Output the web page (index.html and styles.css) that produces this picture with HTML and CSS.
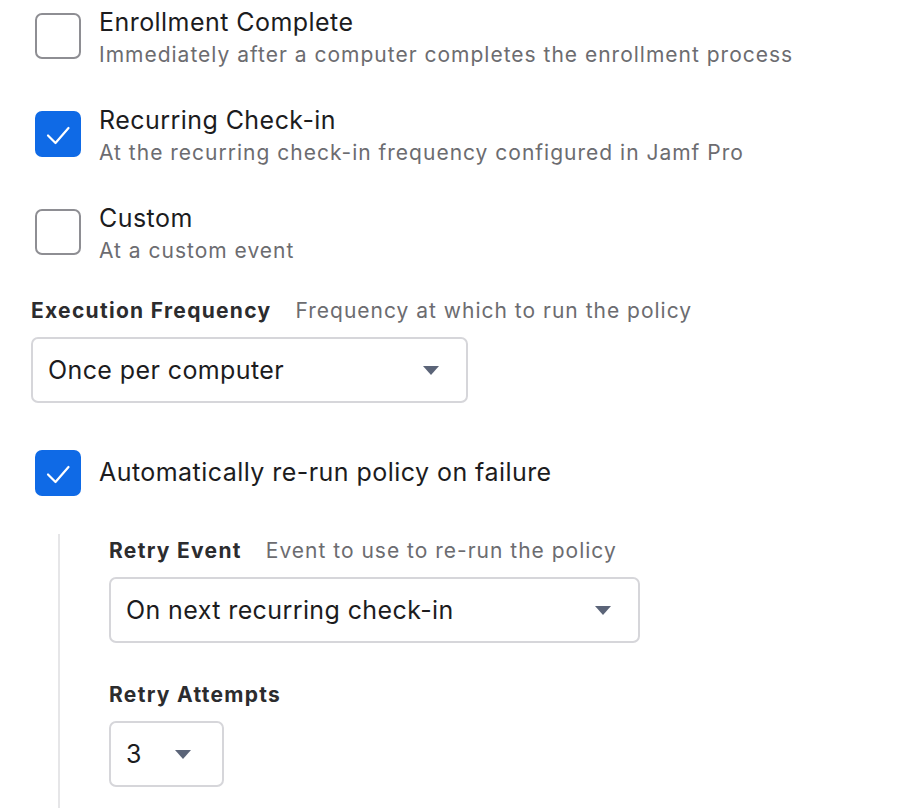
FILE: index.html
```html
<!DOCTYPE html>
<html>
<head>
<meta charset="utf-8">
<link rel="stylesheet" href="styles.css">
</head>
<body>
<div class="page">
  <div class="option">
    <span class="box"></span>
    <div class="text">
      <div class="title">Enrollment Complete</div>
      <div class="desc">Immediately after a computer completes the enrollment process</div>
    </div>
  </div>
  <div class="option">
    <span class="box checked"><svg viewBox="0 0 46 46" width="46" height="46"><path d="M13 24.5 L20.5 32 L33.5 17" fill="none" stroke="#fff" stroke-width="2.2" stroke-linecap="round" stroke-linejoin="round"/></svg></span>
    <div class="text">
      <div class="title">Recurring Check-in</div>
      <div class="desc">At the recurring check-in frequency configured in Jamf Pro</div>
    </div>
  </div>
  <div class="option">
    <span class="box"></span>
    <div class="text">
      <div class="title">Custom</div>
      <div class="desc">At a custom event</div>
    </div>
  </div>

  <div class="field freq">
    <div class="label"><span class="label-main">Execution Frequency</span><span class="helper">Frequency at which to run the policy</span></div>
    <div class="select w-freq"><span class="value">Once per computer</span><span class="caret"></span></div>
  </div>

  <div class="option single">
    <span class="box checked"><svg viewBox="0 0 46 46" width="46" height="46"><path d="M13 24.5 L20.5 32 L33.5 17" fill="none" stroke="#fff" stroke-width="2.2" stroke-linecap="round" stroke-linejoin="round"/></svg></span>
    <div class="title">Automatically re-run policy on failure</div>
  </div>

  <div class="nested">
    <div class="field">
      <div class="label"><span class="label-main">Retry Event</span><span class="helper">Event to use to re-run the policy</span></div>
      <div class="select w-event"><span class="value">On next recurring check-in</span><span class="caret"></span></div>
    </div>
    <div class="field attempts">
      <div class="label"><span class="label-main">Retry Attempts</span></div>
      <div class="select w-attempts"><span class="value">3</span><span class="caret"></span></div>
    </div>
  </div>
</div>
</body>
</html>
```

FILE: styles.css
```css
html, body {
  margin: 0;
  padding: 0;
  background: #ffffff;
}
body {
  font-family: "Inter", "Liberation Sans", sans-serif;
  color: #1c1c1e;
  width: 902px;
  height: 808px;
  overflow: hidden;
}
.page {
  padding: 7px 0 0 35px;
}
.option {
  display: flex;
  align-items: flex-start;
  gap: 18px;
  margin-bottom: 36px;
}
.box {
  flex: none;
  box-sizing: border-box;
  width: 46px;
  height: 46px;
  border: 2px solid #8e8e93;
  border-radius: 7px;
  margin-top: 6px;
  background: #fff;
  display: block;
}
.box.checked {
  border: none;
  background: #0f6ae6;
}
.box svg {
  display: block;
}
.title {
  font-size: 25px;
  line-height: 30px;
  letter-spacing: 0.45px;
  color: #1c1c1e;
}
.desc {
  font-size: 21px;
  line-height: 28px;
  margin-top: 4px;
  color: #6c6c70;
  letter-spacing: 1px;
}
.field {
  display: flex;
  flex-direction: column;
  gap: 12px;
}
.freq {
  margin-left: -4px;
  margin-top: -4px;
}
.label {
  display: flex;
  align-items: baseline;
  line-height: 28px;
}
.label-main {
  font-size: 21px;
  font-weight: 700;
  color: #2c2c2e;
  letter-spacing: 1.3px;
}
.helper {
  font-size: 21px;
  color: #6c6c70;
  margin-left: 24px;
  letter-spacing: 1px;
}
.select {
  box-sizing: border-box;
  height: 66px;
  border: 2px solid #d6d6da;
  border-radius: 7px;
  display: flex;
  align-items: center;
  justify-content: space-between;
  padding: 0 27px 0 15px;
  background: #fff;
}
.value {
  font-size: 25px;
  letter-spacing: 0.4px;
  color: #1c1c1e;
}
.caret {
  width: 0;
  height: 0;
  border-left: 8px solid transparent;
  border-right: 8px solid transparent;
  border-top: 9px solid #5b6478;
}
.w-freq { width: 437px; }
.w-event { width: 531px; }
.w-attempts { width: 115px; padding-right: 31px; }
.option.single {
  align-items: center;
  margin-top: 47px;
  margin-bottom: 38px;
}
.option.single .box {
  margin-top: 0;
}
.option.single .title {
  padding-bottom: 3px;
}
.nested {
  margin-left: 23px;
  border-left: 2px solid #e6e6e8;
  padding: 3px 0 40px 49px;
}
.attempts {
  margin-top: 38px;
}
```
